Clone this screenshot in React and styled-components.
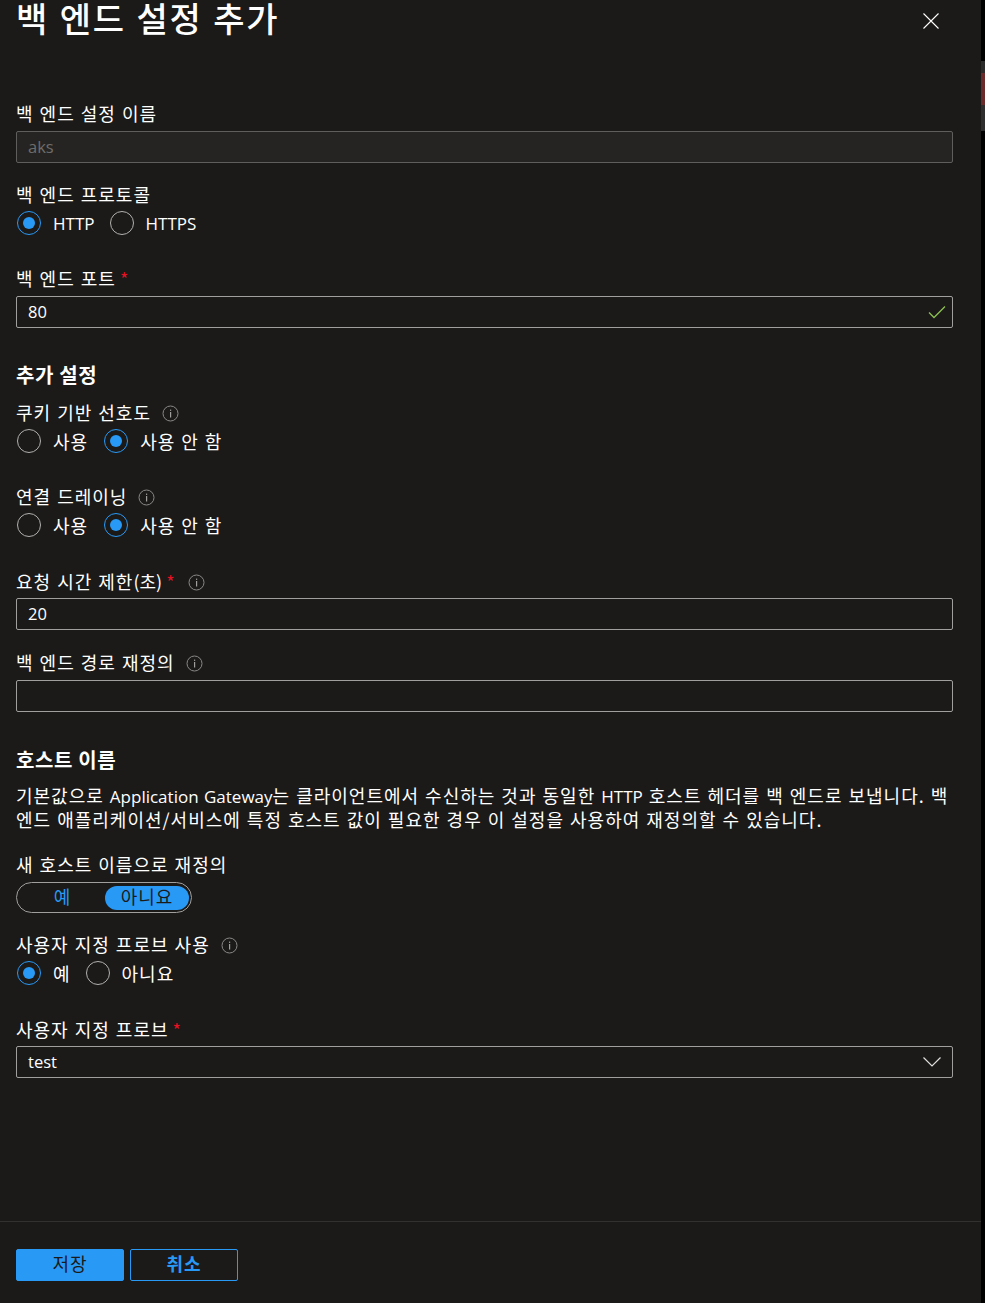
import React from "react";
import styled, { createGlobalStyle } from "styled-components";

const GlobalStyle = createGlobalStyle`
  html, body {
    margin: 0;
    padding: 0;
    background: #1b1a19;
  }
  body {
    font-family: "Noto Sans CJK KR", "Noto Sans", sans-serif;
    color: #ffffff;
  }
  * { box-sizing: border-box; }
`;

const Page = styled.div`
  position: relative;
  width: 985px;
  height: 1303px;
  overflow: hidden;
  background: #000;
  padding-right: 4px;
`;

const Panel = styled.div`
  height: 100%;
  display: flex;
  flex-direction: column;
  background: #1b1a19;
`;

const Body = styled.div`
  flex: 1;
  padding: 0 28px 0 16px;
`;

const Header = styled.div`
  height: 103px;
  display: flex;
  justify-content: space-between;
`;

const Title = styled.h1`
  margin: -6px 0 0;
  font-size: 34px;
  line-height: 48px;
  height: 48px;
  font-weight: 500;
  letter-spacing: 1.6px;
  word-spacing: 1.7px;
  color: #fff;
`;

const CloseButton = styled.button`
  width: 16px;
  height: 16px;
  padding: 0;
  margin: 13px 14px 0 0;
  background: none;
  border: 0;
  display: block;
  svg { display: block; }
`;

const Label = styled.div`
  display: flex;
  align-items: center;
  height: 20px;
  margin-top: ${(p) => p.$top || 0}px;
  font-size: 18px;
  line-height: 20px;
  letter-spacing: 1px;
  word-spacing: 1px;
  color: #fff;
  font-weight: 400;
  white-space: pre;
`;

const Paren = styled.span`
  letter-spacing: 0;
`;

const Required = styled.span`
  color: #e81123;
  margin-left: 4px;
  font-size: 18px;
  letter-spacing: 0;
`;

const InfoIcon = styled.svg`
  width: 17px;
  height: 17px;
  margin-left: ${(p) => p.$gap || 11}px;
  margin-top: 2px;
  flex: none;
`;

const Input = styled.div`
  height: 32px;
  margin-top: ${(p) => p.$top || 8}px;
  border: 1px solid ${(p) => (p.$disabled ? "#605e5c" : "#a19f9d")};
  border-radius: 2px;
  background: ${(p) => (p.$disabled ? "#252423" : "transparent")};
  color: ${(p) => (p.$disabled ? "#6e6c6a" : "#fff")};
  padding: 0 6px 1px 11px;
  display: flex;
  align-items: center;
  justify-content: space-between;
  font-family: "Open Sans", "Noto Sans", sans-serif;
  font-size: 16.5px;
`;

const RadioRow = styled.div`
  display: flex;
  align-items: center;
  gap: ${(p) => p.$gap}px;
  height: 24px;
  margin-top: 7px;
  margin-left: 1px;
`;

const RadioOption = styled.label`
  display: flex;
  align-items: center;
  color: #fff;
  white-space: nowrap;
  font-family: ${(p) => (p.$latin ? '"Open Sans", sans-serif' : "inherit")};
  font-size: ${(p) => (p.$latin ? "17px" : "18px")};
  letter-spacing: ${(p) => (p.$latin ? 0 : 1)}px;
  word-spacing: 1px;
`;

const RadioCircle = styled.span`
  width: 24px;
  height: 24px;
  border-radius: 50%;
  border: 1px solid ${(p) => (p.$on ? "#2899f5" : "#b3b0ad")};
  display: flex;
  align-items: center;
  justify-content: center;
  margin-right: 12px;
  &::after {
    content: "";
    display: ${(p) => (p.$on ? "block" : "none")};
    width: 12px;
    height: 12px;
    border-radius: 50%;
    background: #2899f5;
  }
`;

const SectionTitle = styled.h2`
  margin: ${(p) => p.$top}px 0 0;
  height: 22px;
  font-size: 20px;
  line-height: 22px;
  font-weight: 700;
  letter-spacing: 0.6px;
  color: #fff;
`;

const Paragraph = styled.p`
  margin: 13px 0 0;
  font-size: 18px;
  line-height: 22px;
  color: #fff;
  white-space: nowrap;
  letter-spacing: 1px;
  word-spacing: 1px;
`;

const Latin = styled.span`
  font-family: "Open Sans", sans-serif;
  font-size: 17px;
  letter-spacing: 0;
`;

const Toggle = styled.div`
  display: flex;
  align-items: center;
  width: 176px;
  height: 31px;
  margin-top: 8px;
  padding: 3px;
  border: 1px solid #a19f9d;
  border-radius: 16px;
`;

const ToggleOption = styled.div`
  flex: none;
  width: ${(p) => (p.$on ? 84 : 85)}px;
  height: 24px;
  border-radius: 12px;
  display: flex;
  align-items: center;
  justify-content: center;
  font-size: 18px;
  line-height: 20px;
  letter-spacing: 1px;
  padding-bottom: 4px;
  color: ${(p) => (p.$on ? "#1b1a19" : "#2899f5")};
  background: ${(p) => (p.$on ? "#2899f5" : "transparent")};
`;

const Footer = styled.div`
  height: 82px;
  border-top: 1px solid #323130;
  padding: 27px 16px 0;
  display: flex;
  gap: 6px;
  align-items: flex-start;
`;

const Button = styled.button`
  width: 108px;
  height: 32px;
  border-radius: 2px;
  border: 1px solid #2899f5;
  background: ${(p) => (p.$primary ? "#2899f5" : "transparent")};
  color: ${(p) => (p.$primary ? "#1b1a19" : "#2899f5")};
  font-family: inherit;
  font-size: 18px;
  line-height: 20px;
  letter-spacing: 1px;
  font-weight: ${(p) => (p.$primary ? 400 : 700)};
  padding: 0 0 4px;
`;

const ScrollStrip = styled.div`
  position: absolute;
  right: 0;
  top: 61px;
  width: 4px;
  height: 70px;
  background: linear-gradient(#2b2b2b 0 12px, #6b2a2a 12px 44px, #2e2e2e 44px);
`;

const Info = ({ gap }) => (
  <InfoIcon $gap={gap} viewBox="0 0 17 17" fill="none">
    <circle cx="8.5" cy="8.5" r="7.5" stroke="#8a8886" />
    <rect x="8" y="7" width="1.2" height="5.5" fill="#a19f9d" />
    <rect x="8" y="4.6" width="1.2" height="1.3" fill="#a19f9d" />
  </InfoIcon>
);

const Radios = ({ options, selected, latin, gap = 16 }) => (
  <RadioRow $gap={gap}>
    {options.map((o) => (
      <RadioOption key={o} $latin={latin}>
        <RadioCircle $on={o === selected} />
        {o}
      </RadioOption>
    ))}
  </RadioRow>
);

export default function App() {
  return (
    <Page>
      <GlobalStyle />
      <Panel>
        <Body>
          <Header>
            <Title>백 엔드 설정 추가</Title>
            <CloseButton aria-label="닫기">
              <svg width="16" height="16" viewBox="0 0 16 16">
                <path d="M0.5 0.5 L15.5 15.5 M15.5 0.5 L0.5 15.5" stroke="#fff" strokeWidth="1.1" />
              </svg>
            </CloseButton>
          </Header>

          <Label>백 엔드 설정 이름</Label>
          <Input $disabled>aks</Input>

          <Label $top={21}>백 엔드 프로토콜</Label>
          <Radios options={["HTTP", "HTTPS"]} selected="HTTP" latin gap={15} />

          <Label $top={33}>
            백 엔드 포트<Required>*</Required>
          </Label>
          <Input>
            80
            <svg width="18" height="14" viewBox="0 0 18 14" fill="none">
              <path d="M1 7.5 L6 12.5 L17 1.5" stroke="#8cbf4f" strokeWidth="1.3" />
            </svg>
          </Input>

          <SectionTitle $top={36}>추가 설정</SectionTitle>

          <Label $top={16}>
            쿠키 기반 선호도
            <Info />
          </Label>
          <Radios options={["사용", "사용 안 함"]} selected="사용 안 함" />

          <Label $top={33}>
            연결 드레이닝
            <Info />
          </Label>
          <Radios options={["사용", "사용 안 함"]} selected="사용 안 함" />

          <Label $top={34}>
            요청 시간 제한<Paren>(초)</Paren>
            <Required>*</Required>
            <Info gap={13} />
          </Label>
          <Input $top={7}>20</Input>

          <Label $top={22}>
            백 엔드 경로 재정의
            <Info />
          </Label>
          <Input>{""}</Input>

          <SectionTitle $top={37}>호스트 이름</SectionTitle>

          <Paragraph>
            기본값으로 <Latin>Application Gateway</Latin>는 클라이언트에서 수신하는 것과 동일한 <Latin>HTTP</Latin> 호스트 헤더를 백 엔드로 보냅니다. 백
            <br />
            엔드 애플리케이션/서비스에 특정 호스트 값이 필요한 경우 이 설정을 사용하여 재정의할 수 있습니다.
          </Paragraph>

          <Label $top={24}>새 호스트 이름으로 재정의</Label>
          <Toggle>
            <ToggleOption>예</ToggleOption>
            <ToggleOption $on>아니요</ToggleOption>
          </Toggle>

          <Label $top={21}>
            사용자 지정 프로브 사용
            <Info />
          </Label>
          <Radios options={["예", "아니요"]} selected="예" gap={15} />

          <Label $top={34}>
            사용자 지정 프로브<Required>*</Required>
          </Label>
          <Input $top={7}>
            test
            <svg width="18" height="10" viewBox="0 0 18 10" fill="none" style={{ marginRight: 5 }}>
              <path d="M0.5 0.5 L9 9 L17.5 0.5" stroke="#e1dfdd" strokeWidth="1.2" />
            </svg>
          </Input>
        </Body>
        <Footer>
          <Button $primary>저장</Button>
          <Button>취소</Button>
        </Footer>
      </Panel>
      <ScrollStrip />
    </Page>
  );
}
